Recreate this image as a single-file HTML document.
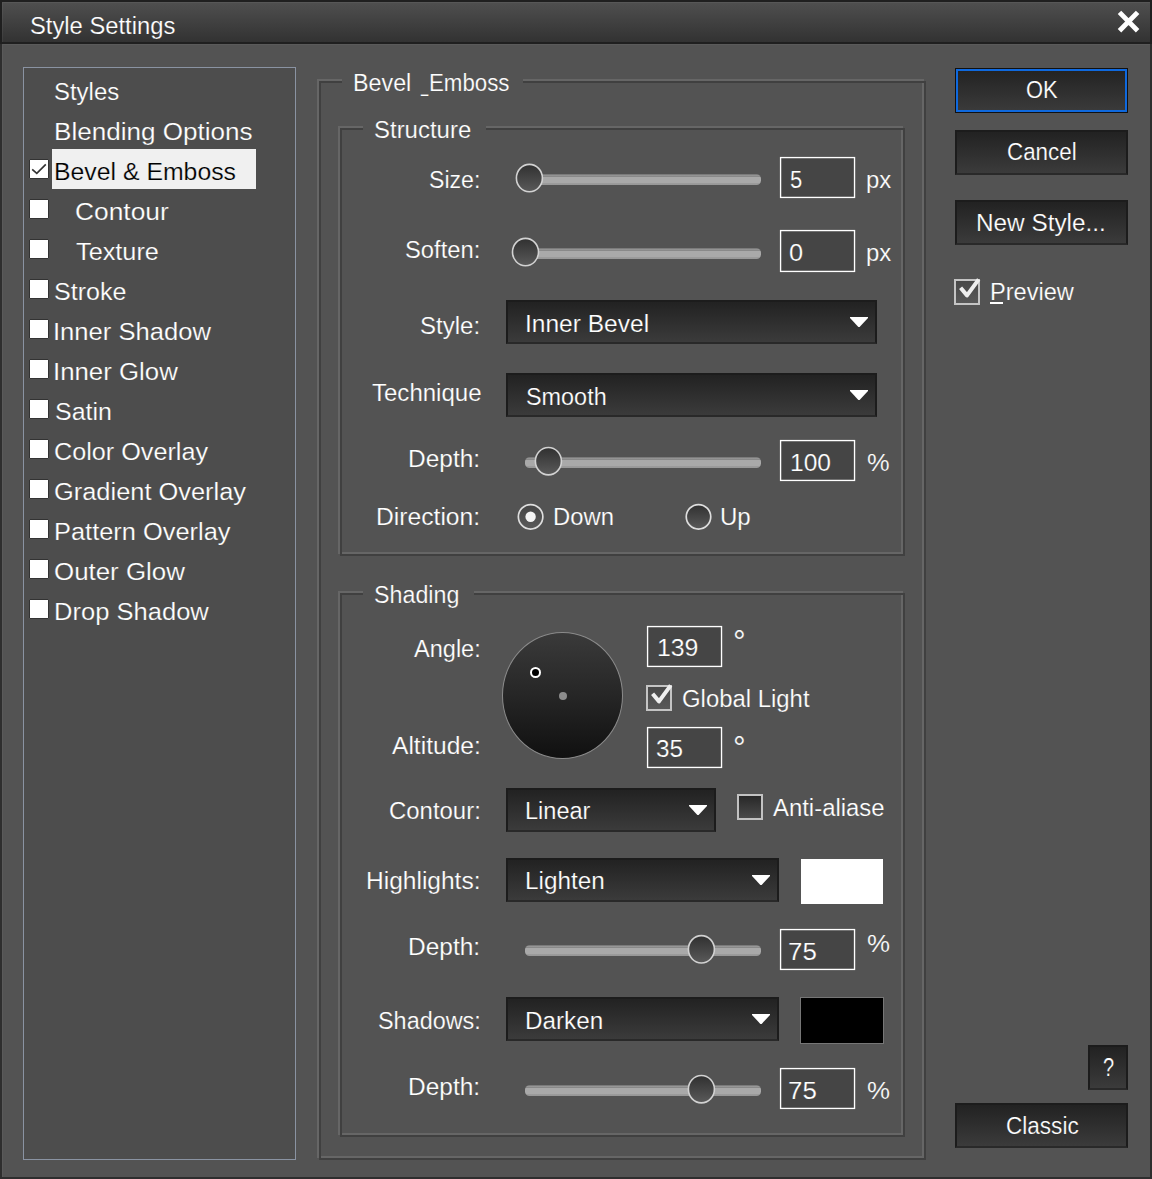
<!DOCTYPE html>
<html><head><meta charset="utf-8"><title>Style Settings</title>
<style>
html,body{margin:0;padding:0}
body{width:1152px;height:1179px;position:relative;overflow:hidden;background:#535353;font-family:"Liberation Sans",sans-serif;font-size:23.5px;color:#fff}
div,svg,span.t{position:absolute;box-sizing:content-box}
span.t{line-height:1;white-space:nowrap;transform-origin:0 0}
</style></head><body>
<svg style="left:0;top:0" width="0" height="0"><defs><linearGradient id="trk" x1="0" y1="0" x2="0" y2="1"><stop offset="0" stop-color="#878787"/><stop offset="0.09" stop-color="#8c8c8c"/><stop offset="0.13" stop-color="#9a9a9a"/><stop offset="0.17" stop-color="#898989"/><stop offset="0.23" stop-color="#898989"/><stop offset="0.27" stop-color="#a9a9a9"/><stop offset="0.8" stop-color="#a9a9a9"/><stop offset="0.85" stop-color="#9b9b9b"/><stop offset="1" stop-color="#979797"/></linearGradient><linearGradient id="thm" x1="0" y1="0" x2="0" y2="1"><stop offset="0" stop-color="#303030"/><stop offset="1" stop-color="#5a5a5a"/></linearGradient><linearGradient id="rdo" x1="0" y1="0" x2="0" y2="1"><stop offset="0" stop-color="#454545"/><stop offset="1" stop-color="#5a5a5a"/></linearGradient></defs></svg>
<div style="left:0px;top:0px;width:1152px;height:44px;background:#1f1f1f"></div>
<div style="left:2px;top:2px;width:1148px;height:40px;background:linear-gradient(#4f4f4f,#323232);box-shadow:inset 1px 1px 0 rgba(255,255,255,.05)"></div>
<div style="left:0px;top:44px;width:1152px;height:1135px;background:#2e2e2e"></div>
<div style="left:2px;top:44px;width:1148px;height:1133px;background:#535353;box-shadow:inset 1px 1px 0 rgba(255,255,255,.045)"></div>
<svg style="left:1114px;top:7px" width="30" height="30" viewBox="0 0 30 30"><path d="M5.5 5.4L23.6 23.7M23.6 5.4L5.5 23.7" stroke="#fff" stroke-width="4.9" fill="none"/></svg>
<div style="left:23px;top:67px;width:271px;height:1091px;border:1px solid #8a93a2;background:#4d4d4d"></div>
<div style="left:52px;top:149px;width:204px;height:40px;background:#f0f0f0"></div>
<div style="left:29px;top:159px;width:18px;height:18px;border:1px solid #333;background:#fff;border-radius:1px"></div>
<svg style="left:29px;top:159px" width="20" height="20" viewBox="0 0 20 20"><path d="M3.2 10.3L7.8 14.4L16.8 5.4" fill="none" stroke="#333" stroke-width="1.6"/></svg>
<div style="left:29px;top:199px;width:18px;height:18px;border:1px solid #333;background:#fff;border-radius:1px"></div>
<div style="left:29px;top:239px;width:18px;height:18px;border:1px solid #333;background:#fff;border-radius:1px"></div>
<div style="left:29px;top:279px;width:18px;height:18px;border:1px solid #333;background:#fff;border-radius:1px"></div>
<div style="left:29px;top:319px;width:18px;height:18px;border:1px solid #333;background:#fff;border-radius:1px"></div>
<div style="left:29px;top:359px;width:18px;height:18px;border:1px solid #333;background:#fff;border-radius:1px"></div>
<div style="left:29px;top:399px;width:18px;height:18px;border:1px solid #333;background:#fff;border-radius:1px"></div>
<div style="left:29px;top:439px;width:18px;height:18px;border:1px solid #333;background:#fff;border-radius:1px"></div>
<div style="left:29px;top:479px;width:18px;height:18px;border:1px solid #333;background:#fff;border-radius:1px"></div>
<div style="left:29px;top:519px;width:18px;height:18px;border:1px solid #333;background:#fff;border-radius:1px"></div>
<div style="left:29px;top:559px;width:18px;height:18px;border:1px solid #333;background:#fff;border-radius:1px"></div>
<div style="left:29px;top:599px;width:18px;height:18px;border:1px solid #333;background:#fff;border-radius:1px"></div>
<div style="left:317px;top:79px;width:2px;height:1079px;background:#666"></div>
<div style="left:922px;top:79px;width:2px;height:1079px;background:#666"></div>
<div style="left:317px;top:1156px;width:607px;height:2px;background:#666"></div>
<div style="left:317px;top:79px;width:25px;height:2px;background:#666"></div>
<div style="left:523px;top:79px;width:401px;height:2px;background:#666"></div>
<div style="left:319px;top:81px;width:2px;height:1079px;background:#404040"></div>
<div style="left:924px;top:81px;width:2px;height:1079px;background:#404040"></div>
<div style="left:319px;top:1158px;width:607px;height:2px;background:#404040"></div>
<div style="left:319px;top:81px;width:23px;height:2px;background:#404040"></div>
<div style="left:523px;top:81px;width:403px;height:2px;background:#404040"></div>
<div style="left:338px;top:126px;width:2px;height:428px;background:#666"></div>
<div style="left:901px;top:126px;width:2px;height:428px;background:#666"></div>
<div style="left:338px;top:552px;width:565px;height:2px;background:#666"></div>
<div style="left:338px;top:126px;width:25px;height:2px;background:#666"></div>
<div style="left:486px;top:126px;width:417px;height:2px;background:#666"></div>
<div style="left:340px;top:128px;width:2px;height:428px;background:#404040"></div>
<div style="left:903px;top:128px;width:2px;height:428px;background:#404040"></div>
<div style="left:340px;top:554px;width:565px;height:2px;background:#404040"></div>
<div style="left:340px;top:128px;width:23px;height:2px;background:#404040"></div>
<div style="left:486px;top:128px;width:419px;height:2px;background:#404040"></div>
<div style="left:338px;top:591px;width:2px;height:544px;background:#666"></div>
<div style="left:901px;top:591px;width:2px;height:544px;background:#666"></div>
<div style="left:338px;top:1133px;width:565px;height:2px;background:#666"></div>
<div style="left:338px;top:591px;width:25px;height:2px;background:#666"></div>
<div style="left:474px;top:591px;width:429px;height:2px;background:#666"></div>
<div style="left:340px;top:593px;width:2px;height:544px;background:#404040"></div>
<div style="left:903px;top:593px;width:2px;height:544px;background:#404040"></div>
<div style="left:340px;top:1135px;width:565px;height:2px;background:#404040"></div>
<div style="left:340px;top:593px;width:23px;height:2px;background:#404040"></div>
<div style="left:474px;top:593px;width:431px;height:2px;background:#404040"></div>
<svg style="left:514px;top:161px" width="251" height="36" viewBox="514 161 251 36"><rect x="516" y="174.3" width="245" height="10.8" rx="4.5" fill="url(#trk)"/><ellipse cx="529.4" cy="178.1" rx="13.0" ry="13.7" fill="url(#thm)" stroke="#d2d2d2" stroke-width="1.6"/></svg>
<svg style="left:510px;top:235px" width="255" height="36" viewBox="510 235 255 36"><rect x="512" y="248.3" width="249" height="10.8" rx="4.5" fill="url(#trk)"/><ellipse cx="525.5" cy="252.1" rx="13.0" ry="13.7" fill="url(#thm)" stroke="#d2d2d2" stroke-width="1.6"/></svg>
<svg style="left:523px;top:444px" width="242" height="36" viewBox="523 444 242 36"><rect x="525" y="457.3" width="236" height="10.8" rx="4.5" fill="url(#trk)"/><ellipse cx="548.4" cy="461.2" rx="13.0" ry="13.7" fill="url(#thm)" stroke="#d2d2d2" stroke-width="1.6"/></svg>
<svg style="left:523px;top:932px" width="242" height="36" viewBox="523 932 242 36"><rect x="525" y="945.2" width="236" height="10.8" rx="4.5" fill="url(#trk)"/><ellipse cx="701.4" cy="949.3" rx="13.0" ry="13.7" fill="url(#thm)" stroke="#d2d2d2" stroke-width="1.6"/></svg>
<svg style="left:523px;top:1072px" width="242" height="36" viewBox="523 1072 242 36"><rect x="525" y="1085.2" width="236" height="10.8" rx="4.5" fill="url(#trk)"/><ellipse cx="701.4" cy="1089.2" rx="13.0" ry="13.7" fill="url(#thm)" stroke="#d2d2d2" stroke-width="1.6"/></svg>
<svg style="left:778px;top:155px" width="79" height="45" viewBox="778 155 79 45"><rect x="780.575" y="157.575" width="73.950" height="39.850" fill="#454545" stroke="#fff" stroke-width="1.35"/></svg>
<svg style="left:778px;top:228px" width="79" height="46" viewBox="778 228 79 46"><rect x="780.575" y="230.575" width="73.950" height="40.850" fill="#454545" stroke="#fff" stroke-width="1.35"/></svg>
<svg style="left:778px;top:438px" width="79" height="45" viewBox="778 438 79 45"><rect x="780.575" y="440.575" width="73.950" height="39.850" fill="#454545" stroke="#fff" stroke-width="1.35"/></svg>
<svg style="left:645px;top:624px" width="79" height="45" viewBox="645 624 79 45"><rect x="647.575" y="626.575" width="73.950" height="39.850" fill="#454545" stroke="#fff" stroke-width="1.35"/></svg>
<svg style="left:645px;top:725px" width="79" height="45" viewBox="645 725 79 45"><rect x="647.575" y="727.575" width="73.950" height="39.850" fill="#454545" stroke="#fff" stroke-width="1.35"/></svg>
<svg style="left:778px;top:927px" width="79" height="45" viewBox="778 927 79 45"><rect x="780.575" y="929.575" width="73.950" height="39.850" fill="#454545" stroke="#fff" stroke-width="1.35"/></svg>
<svg style="left:778px;top:1066px" width="79" height="45" viewBox="778 1066 79 45"><rect x="780.575" y="1068.575" width="73.950" height="39.850" fill="#454545" stroke="#fff" stroke-width="1.35"/></svg>
<div style="left:506px;top:300px;width:367px;height:40px;border:2px solid #1c1c1c;border-bottom-color:#292929;background:linear-gradient(#222,#3b3b3b)"></div>
<svg style="left:850px;top:317px" width="18" height="11" viewBox="0 0 18 11"><path d="M0 0H18V1L9.6 10H8.4L0 1Z" fill="#fff"/></svg>
<div style="left:506px;top:373px;width:367px;height:40px;border:2px solid #1c1c1c;border-bottom-color:#292929;background:linear-gradient(#222,#3b3b3b)"></div>
<svg style="left:850px;top:390px" width="18" height="11" viewBox="0 0 18 11"><path d="M0 0H18V1L9.6 10H8.4L0 1Z" fill="#fff"/></svg>
<div style="left:506px;top:788px;width:206px;height:40px;border:2px solid #1c1c1c;border-bottom-color:#292929;background:linear-gradient(#222,#3b3b3b)"></div>
<svg style="left:689px;top:805px" width="18" height="11" viewBox="0 0 18 11"><path d="M0 0H18V1L9.6 10H8.4L0 1Z" fill="#fff"/></svg>
<div style="left:506px;top:858px;width:269px;height:40px;border:2px solid #1c1c1c;border-bottom-color:#292929;background:linear-gradient(#222,#3b3b3b)"></div>
<svg style="left:752px;top:875px" width="18" height="11" viewBox="0 0 18 11"><path d="M0 0H18V1L9.6 10H8.4L0 1Z" fill="#fff"/></svg>
<div style="left:506px;top:997px;width:269px;height:40px;border:2px solid #1c1c1c;border-bottom-color:#292929;background:linear-gradient(#222,#3b3b3b)"></div>
<svg style="left:752px;top:1014px" width="18" height="11" viewBox="0 0 18 11"><path d="M0 0H18V1L9.6 10H8.4L0 1Z" fill="#fff"/></svg>
<svg style="left:514px;top:500px" width="32" height="32" viewBox="514 500 32 32"><circle cx="530.6" cy="516.8" r="12.25" fill="url(#rdo)" stroke="#dedede" stroke-width="1.7"/><circle cx="530.6" cy="516.8" r="5.2" fill="#f4f4f4"/></svg>
<svg style="left:682px;top:500px" width="32" height="32" viewBox="682 500 32 32"><circle cx="698.5" cy="516.8" r="12.25" fill="url(#thm)" stroke="#dedede" stroke-width="1.7"/></svg>
<div style="left:502px;top:632px;width:118.5px;height:124.6px;border:1px solid #8a8a8a;border-radius:50%;background:linear-gradient(#3a3a3a,#262626 50%,#101010)"></div>
<div style="left:558.5px;top:691.5px;width:8px;height:8px;border-radius:50%;background:#8c8c8c"></div>
<div style="left:529.6px;top:666.8px;width:7.6px;height:7.6px;border:2px solid #fff;border-radius:50%;background:#000"></div>
<div style="left:646px;top:685px;width:22px;height:22px;border:2px solid #c4c4c4;background:linear-gradient(#484848,#585858)"></div>
<svg style="left:646px;top:683px" width="28" height="28" viewBox="0 0 28 28"><path d="M6.6 10.8L13 18.4L24.7 2.4" fill="none" stroke="#eee" stroke-width="4" stroke-linejoin="round"/></svg>
<div style="left:737px;top:794px;width:22px;height:22px;border:2px solid #c2c2c2;background:linear-gradient(#282828,#4a4a4a)"></div>
<div style="left:954px;top:279px;width:22px;height:22px;border:2px solid #c4c4c4;background:linear-gradient(#484848,#585858)"></div>
<svg style="left:954px;top:277px" width="28" height="28" viewBox="0 0 28 28"><path d="M6.6 10.8L13 18.4L24.7 2.4" fill="none" stroke="#eee" stroke-width="4" stroke-linejoin="round"/></svg>
<div style="left:990px;top:302px;width:13px;height:2px;background:#fff"></div>
<div style="left:801px;top:859px;width:82px;height:45px;background:#fff"></div>
<div style="left:800px;top:997px;width:82px;height:45px;border:1px solid #767676;background:#000"></div>
<div style="left:955px;top:68px;width:171px;height:43px;border:1px solid #111;background:linear-gradient(#222,#3b3b3b);box-shadow:inset 0 0 0 2px #0f69de"></div>
<div style="left:955px;top:130px;width:169px;height:41px;border:2px solid #1c1c1c;border-bottom-color:#292929;background:linear-gradient(#222,#3b3b3b)"></div>
<div style="left:955px;top:200px;width:169px;height:41px;border:2px solid #1c1c1c;border-bottom-color:#292929;background:linear-gradient(#222,#3b3b3b)"></div>
<div style="left:1088px;top:1045px;width:36px;height:41px;border:2px solid #1c1c1c;border-bottom-color:#292929;background:linear-gradient(#222,#3b3b3b)"></div>
<div style="left:955px;top:1103px;width:169px;height:41px;border:2px solid #1c1c1c;border-bottom-color:#292929;background:linear-gradient(#222,#3b3b3b)"></div>
<span class="t" style="left:29.69px;top:15.01px;transform:scaleX(1.0110);-webkit-text-stroke:0.2px #414141">Style Settings</span>
<span class="t" style="left:54.38px;top:81.01px;transform:scaleX(1.0186);-webkit-text-stroke:0.2px #4d4d4d">Styles</span>
<span class="t" style="left:54.29px;top:121.01px;transform:scaleX(1.1093);-webkit-text-stroke:0.2px #4d4d4d">Blending Options</span>
<span class="t" style="left:54.39px;top:161.01px;transform:scaleX(1.0556);-webkit-text-stroke:0.2px #f0f0f0;color:#000">Bevel &amp; Emboss</span>
<span class="t" style="left:75.17px;top:201.01px;transform:scaleX(1.1220);-webkit-text-stroke:0.2px #4d4d4d">Contour</span>
<span class="t" style="left:75.86px;top:241.01px;transform:scaleX(1.0755);-webkit-text-stroke:0.2px #4d4d4d">Texture</span>
<span class="t" style="left:54.33px;top:281.01px;transform:scaleX(1.0660);-webkit-text-stroke:0.2px #4d4d4d">Stroke</span>
<span class="t" style="left:53.31px;top:321.01px;transform:scaleX(1.0892);-webkit-text-stroke:0.2px #4d4d4d">Inner Shadow</span>
<span class="t" style="left:53.29px;top:361.01px;transform:scaleX(1.0980);-webkit-text-stroke:0.2px #4d4d4d">Inner Glow</span>
<span class="t" style="left:54.54px;top:401.01px;transform:scaleX(1.0627);-webkit-text-stroke:0.2px #4d4d4d">Satin</span>
<span class="t" style="left:54.42px;top:441.01px;transform:scaleX(1.0722);-webkit-text-stroke:0.2px #4d4d4d">Color Overlay</span>
<span class="t" style="left:54.41px;top:481.01px;transform:scaleX(1.0811);-webkit-text-stroke:0.2px #4d4d4d">Gradient Overlay</span>
<span class="t" style="left:53.55px;top:521.01px;transform:scaleX(1.0811);-webkit-text-stroke:0.2px #4d4d4d">Pattern Overlay</span>
<span class="t" style="left:54.39px;top:561.01px;transform:scaleX(1.1012);-webkit-text-stroke:0.2px #4d4d4d">Outer Glow</span>
<span class="t" style="left:53.53px;top:601.01px;transform:scaleX(1.0873);-webkit-text-stroke:0.2px #4d4d4d">Drop Shadow</span>
<span class="t" style="left:352.52px;top:72.01px;transform:scaleX(0.9916);-webkit-text-stroke:0.2px #535353">Bevel</span>
<span class="t" style="left:420.62px;top:72.01px;transform:scaleX(0.5507);-webkit-text-stroke:0.2px #535353">_</span>
<span class="t" style="left:428.80px;top:72.01px;transform:scaleX(0.9485);-webkit-text-stroke:0.2px #535353">Emboss</span>
<span class="t" style="left:374.38px;top:119.01px;transform:scaleX(1.0196);-webkit-text-stroke:0.2px #535353">Structure</span>
<span class="t" style="left:429.02px;top:168.51px;transform:scaleX(0.9834);-webkit-text-stroke:0.2px #535353">Size:</span>
<span class="t" style="left:405.19px;top:239.01px;transform:scaleX(1.0106);-webkit-text-stroke:0.2px #535353">Soften:</span>
<span class="t" style="left:789.86px;top:168.51px;transform:scaleX(0.9375);-webkit-text-stroke:0.2px #454545">5</span>
<span class="t" style="left:866.37px;top:168.51px;transform:scaleX(1.0187);-webkit-text-stroke:0.2px #535353">px</span>
<span class="t" style="left:788.83px;top:242.01px;transform:scaleX(1.0796);-webkit-text-stroke:0.2px #454545">0</span>
<span class="t" style="left:866.37px;top:242.01px;transform:scaleX(1.0187);-webkit-text-stroke:0.2px #535353">px</span>
<span class="t" style="left:420.38px;top:315.41px;transform:scaleX(1.0226);-webkit-text-stroke:0.2px #535353">Style:</span>
<span class="t" style="left:524.71px;top:313.01px;transform:scaleX(1.0438);-webkit-text-stroke:0.2px #2e2e2e">Inner Bevel</span>
<span class="t" style="left:371.59px;top:381.81px;transform:scaleX(1.0221);-webkit-text-stroke:0.2px #535353">Technique</span>
<span class="t" style="left:525.90px;top:386.01px;transform:scaleX(0.9959);-webkit-text-stroke:0.2px #2e2e2e">Smooth</span>
<span class="t" style="left:408.42px;top:447.81px;transform:scaleX(1.0413);-webkit-text-stroke:0.2px #535353">Depth:</span>
<span class="t" style="left:790.12px;top:451.61px;transform:scaleX(1.0453);-webkit-text-stroke:0.2px #454545">100</span>
<span class="t" style="left:867.43px;top:451.61px;transform:scaleX(1.0829);-webkit-text-stroke:0.2px #535353">%</span>
<span class="t" style="left:376.41px;top:505.71px;transform:scaleX(1.0491);-webkit-text-stroke:0.2px #535353">Direction:</span>
<span class="t" style="left:552.67px;top:505.61px;transform:scaleX(1.0139);-webkit-text-stroke:0.2px #535353">Down</span>
<span class="t" style="left:720.16px;top:505.61px;transform:scaleX(1.0231);-webkit-text-stroke:0.2px #535353">Up</span>
<span class="t" style="left:374.21px;top:583.81px;transform:scaleX(0.9896);-webkit-text-stroke:0.2px #535353">Shading</span>
<span class="t" style="left:413.70px;top:638.01px;transform:scaleX(1.0015);-webkit-text-stroke:0.2px #535353">Angle:</span>
<span class="t" style="left:391.70px;top:734.81px;transform:scaleX(1.0461);-webkit-text-stroke:0.2px #535353">Altitude:</span>
<span class="t" style="left:656.60px;top:637.21px;transform:scaleX(1.0566);-webkit-text-stroke:0.2px #454545">139</span>
<span class="t" style="left:681.58px;top:687.71px;transform:scaleX(1.0170);-webkit-text-stroke:0.2px #535353">Global Light</span>
<span class="t" style="left:656.27px;top:738.01px;transform:scaleX(1.0341);-webkit-text-stroke:0.2px #454545">35</span>
<span class="t" style="left:733.31px;top:625.40px;transform:scaleX(0.9368);font-size:33.83px;-webkit-text-stroke:0.2px #535353">°</span>
<span class="t" style="left:733.31px;top:730.70px;transform:scaleX(0.9368);font-size:33.83px;-webkit-text-stroke:0.2px #535353">°</span>
<span class="t" style="left:388.68px;top:800.31px;transform:scaleX(1.0184);-webkit-text-stroke:0.2px #535353">Contour:</span>
<span class="t" style="left:524.80px;top:800.31px;transform:scaleX(1.0016);-webkit-text-stroke:0.2px #2e2e2e">Linear</span>
<span class="t" style="left:773.40px;top:796.81px;transform:scaleX(1.0170);-webkit-text-stroke:0.2px #535353">Anti-aliase</span>
<span class="t" style="left:366.02px;top:870.31px;transform:scaleX(1.0436);-webkit-text-stroke:0.2px #535353">Highlights:</span>
<span class="t" style="left:524.74px;top:870.31px;transform:scaleX(1.0335);-webkit-text-stroke:0.2px #2e2e2e">Lighten</span>
<span class="t" style="left:408.42px;top:936.31px;transform:scaleX(1.0413);-webkit-text-stroke:0.2px #535353">Depth:</span>
<span class="t" style="left:788.08px;top:940.71px;transform:scaleX(1.1014);-webkit-text-stroke:0.2px #454545">75</span>
<span class="t" style="left:867.12px;top:933.41px;transform:scaleX(1.1036);-webkit-text-stroke:0.2px #535353">%</span>
<span class="t" style="left:377.60px;top:1009.81px;transform:scaleX(0.9963);-webkit-text-stroke:0.2px #535353">Shadows:</span>
<span class="t" style="left:524.74px;top:1009.81px;transform:scaleX(1.0320);-webkit-text-stroke:0.2px #2e2e2e">Darken</span>
<span class="t" style="left:408.42px;top:1076.31px;transform:scaleX(1.0413);-webkit-text-stroke:0.2px #535353">Depth:</span>
<span class="t" style="left:788.08px;top:1080.11px;transform:scaleX(1.1014);-webkit-text-stroke:0.2px #454545">75</span>
<span class="t" style="left:867.12px;top:1080.01px;transform:scaleX(1.1036);-webkit-text-stroke:0.2px #535353">%</span>
<span class="t" style="left:1025.57px;top:79.41px;transform:scaleX(0.9333);-webkit-text-stroke:0.2px #2e2e2e">OK</span>
<span class="t" style="left:1006.55px;top:140.91px;transform:scaleX(0.9514);-webkit-text-stroke:0.2px #2e2e2e">Cancel</span>
<span class="t" style="left:976.03px;top:212.11px;transform:scaleX(1.0351);-webkit-text-stroke:0.2px #2e2e2e">New Style...</span>
<span class="t" style="left:989.79px;top:281.41px;transform:scaleX(1.0035);-webkit-text-stroke:0.2px #535353">Preview</span>
<span class="t" style="left:1103.44px;top:1053.94px;transform:scaleX(0.7496);font-size:26.63px;-webkit-text-stroke:0.2px #2e2e2e">?</span>
<span class="t" style="left:1005.84px;top:1114.71px;transform:scaleX(0.9597);-webkit-text-stroke:0.2px #2e2e2e">Classic</span>
</body></html>
